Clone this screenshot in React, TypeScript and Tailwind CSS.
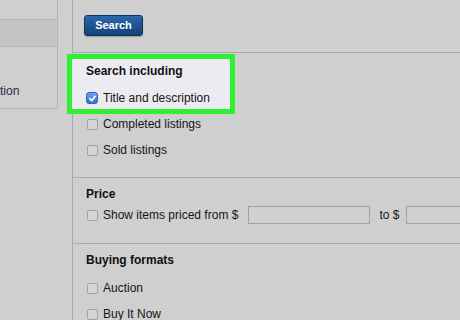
import React from 'react';

const font = { fontFamily: '"Liberation Sans", Arial, sans-serif' };

function Box({ checked = false }: { checked?: boolean }) {
    if (checked) {
        return (
            <span className="flex h-[12px] w-[12px] shrink-0 items-center justify-center rounded-[3px] border border-[#2b64b8] bg-gradient-to-b from-[#6aa6ec] to-[#2f74d0]">
                <svg width="9" height="9" viewBox="0 0 10 10">
                    <path d="M2 5.2 L4.2 7.4 L8 2.6" fill="none" stroke="white" strokeWidth="1.8" strokeLinecap="round" strokeLinejoin="round" />
                </svg>
            </span>
        );
    }
    return <span className="block h-[11px] w-[11px] shrink-0 rounded-[2px] border border-[#a2a2a2] bg-[#d5d5d5]" />;
}

function Option({ label, checked = false }: { label: string; checked?: boolean }) {
    return (
        <div className="flex h-[26px] items-center whitespace-nowrap">
            <div className={`flex w-[17px] shrink-0 ${checked ? 'pl-0' : 'pl-[1px]'}`}>
                <Box checked={checked} />
            </div>
            <span className="text-[12px] text-[#161616]">{label}</span>
        </div>
    );
}

export default function App() {
    return (
        <div className="relative flex h-[320px] w-[460px] overflow-hidden bg-[#cfcfcf]" style={font}>
            {/* side panel */}
            <div className="w-[73px] shrink-0 border-r border-[#a9a9a9]">
                <div className="w-[58px] border-r border-b border-[#b4b4b4]">
                    <div className="h-[19px]" />
                    <div className="h-[28px] border-y border-[#b8b8b8] bg-[#c4c4c4]" />
                    <div className="flex h-[61px] items-end pb-[11px]">
                        <span className="text-[12px] leading-none text-[#1d2b55]">tion</span>
                    </div>
                </div>
            </div>

            {/* highlight annotation */}
            <div className="pointer-events-none absolute left-[67px] top-[54px] h-[60px] w-[168px] border-[5px] border-[#30ee30] bg-[#ecebf2]" />

            {/* filters */}
            <div className="relative z-10 min-w-0 flex-1">
                <div className="h-[53px] border-b border-[#ababab] pl-[11px] pt-[12px]">
                    <button className="h-[21px] w-[59px] rounded-[3px] border border-[#0e3461] bg-gradient-to-b from-[#2c67ac] to-[#144277] text-[11px] font-bold text-white shadow-[0_1px_1px_rgba(0,0,0,0.25)]">
                        Search
                    </button>
                </div>

                <div className="h-[125px] border-b border-[#ababab] pl-[13px] pt-[4px]">
                    <div className="flex h-[28px] items-center text-[12px] font-bold text-[#111]">Search including</div>
                    <Option label="Title and description" checked />
                    <Option label="Completed listings" />
                    <Option label="Sold listings" />
                </div>

                <div className="h-[66px] border-b border-[#ababab] pl-[13px] pt-[6px]">
                    <div className="flex h-[20px] items-center text-[12px] font-bold text-[#111]">Price</div>
                    <div className="flex h-[22px] items-center whitespace-nowrap">
                        <div className="flex w-[17px] shrink-0 pl-[1px]">
                            <Box />
                        </div>
                        <span className="shrink-0 text-[12px] text-[#161616]">Show items priced from $</span>
                        <span className="ml-[10px] h-[18px] w-[122px] shrink-0 border border-[#a0a0a0] bg-[#d0d0d0]" />
                        <span className="ml-[9px] shrink-0 text-[12px] text-[#161616]">to $</span>
                        <span className="ml-[7px] h-[18px] w-[80px] shrink-0 border border-[#a0a0a0] bg-[#d0d0d0]" />
                    </div>
                </div>

                <div className="pl-[13px] pt-[6px]">
                    <div className="flex h-[20px] items-center text-[12px] font-bold text-[#111]">Buying formats</div>
                    <div className="h-[5px]" />
                    <Option label="Auction" />
                    <Option label="Buy It Now" />
                </div>
            </div>
        </div>
    );
}
